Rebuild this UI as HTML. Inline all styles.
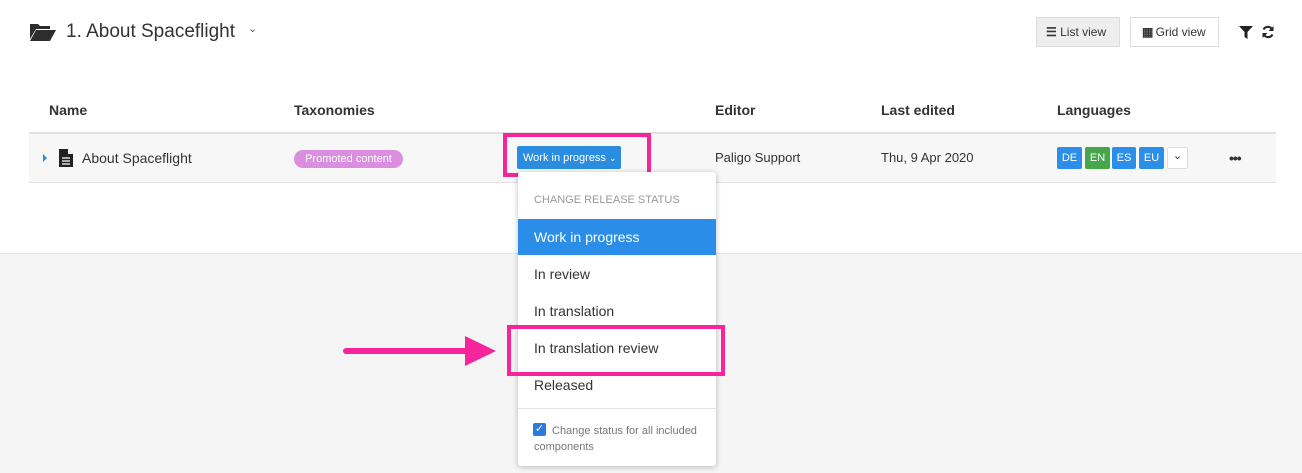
<!DOCTYPE html>
<html><head><style>
*{margin:0;padding:0;box-sizing:border-box}
body{width:1302px;height:473px;position:relative;overflow:hidden;background:#fff;font-family:"Liberation Sans",sans-serif;color:#333}
.a{position:absolute;white-space:nowrap}
.lang{position:absolute;top:147px;height:22px;color:#fff;font-size:11px;text-align:center;line-height:22px;border-radius:2px}
.it{position:absolute;left:534px;font-size:14px;color:#333}
</style></head><body>
<div class="a" style="left:0;top:253px;width:1302px;height:220px;background:#f5f5f5;border-top:1px solid #e4e4e4"></div>
<svg class="a" style="left:29px;top:22px" width="28" height="20" viewBox="0 0 28 20"><path d="M1 2h8l2 2h10v3H7L1 17z" fill="#2d2d2d"/><path d="M7 8h20l-6 11H1z" fill="#2d2d2d"/></svg>
<div class="a" style="left:66px;top:21px;font-size:19px;color:#333">1. About Spaceflight</div>
<div class="a" style="left:248px;top:22px;font-size:11px;color:#555">&#8964;</div>
<div class="a" style="left:1036px;top:17px;width:84px;height:30px;background:#eee;border:1px solid #ddd;font-size:12px;line-height:28px;padding-left:9px"><span style="font-weight:bold">&#9776;</span> List view</div>
<div class="a" style="left:1130px;top:17px;width:89px;height:30px;background:#fff;border:1px solid #ddd;font-size:12px;line-height:28px;padding-left:11px"><span style="font-weight:bold;letter-spacing:-1px">&#9638;</span> Grid view</div>
<svg class="a" style="left:1239px;top:26px" width="14" height="13" viewBox="0 0 14 13"><path d="M0 0h14L8.5 6v7L5.5 11V6z" fill="#222"/></svg>
<svg class="a" style="left:1261px;top:25px" width="14" height="14" viewBox="0 0 14 14"><path d="M11.5 5A5 5 0 0 0 2.5 4.5M2.5 9a5 5 0 0 0 9 .5" stroke="#222" stroke-width="2" fill="none"/><path d="M12.5 1v5h-5zM1.5 13V8h5z" fill="#222"/></svg>
<div class="a" style="left:49px;top:102px;font-size:14px;font-weight:bold">Name</div>
<div class="a" style="left:294px;top:102px;font-size:14px;font-weight:bold">Taxonomies</div>
<div class="a" style="left:715px;top:102px;font-size:14px;font-weight:bold">Editor</div>
<div class="a" style="left:881px;top:102px;font-size:14px;font-weight:bold">Last edited</div>
<div class="a" style="left:1057px;top:102px;font-size:14px;font-weight:bold">Languages</div>
<div class="a" style="left:29px;top:132px;width:1247px;height:51px;background:#f7f7f7;border-top:2px solid #e2e2e2;border-bottom:1px solid #e2e2e2"></div>
<div class="a" style="left:43px;top:154px;width:0;height:0;border-left:4px solid #2a8de0;border-top:4px solid transparent;border-bottom:4px solid transparent"></div>
<svg class="a" style="left:59px;top:149px" width="14" height="18" viewBox="0 0 14 18"><path d="M0 0h9l5 5v13H0z" fill="#222"/><path d="M9 0v5h5" fill="#fff"/><path d="M3 9h8M3 12h8M3 15h8" stroke="#fff" stroke-width="1.3"/></svg>
<div class="a" style="left:82px;top:150px;font-size:14px">About Spaceflight</div>
<div class="a" style="left:294px;top:150px;width:109px;height:18px;background:#d98ee0;border-radius:9px;color:#fff;font-size:11px;text-align:center;line-height:18px">Promoted content</div>
<div class="a" style="left:503px;top:133px;width:148px;height:44px;border:4px solid #f7259c"></div>
<div class="a" style="left:517px;top:146px;width:104px;height:23px;background:#2a8de0;border-radius:2px;color:#fff;font-size:11px;line-height:24px;padding-left:6px">Work in progress <span style="font-size:9px">&#8964;</span></div>
<div class="a" style="left:715px;top:150px;font-size:13px">Paligo Support</div>
<div class="a" style="left:881px;top:150px;font-size:13px">Thu, 9 Apr 2020</div>
<div class="lang" style="left:1057px;width:25px;background:#2b8ee8">DE</div>
<div class="lang" style="left:1085px;width:25px;background:#45a74a">EN</div>
<div class="lang" style="left:1112px;width:24px;background:#2b8ee8">ES</div>
<div class="lang" style="left:1139px;width:25px;background:#2b8ee8">EU</div>
<div class="lang" style="left:1167px;width:21px;background:#fff;border:1px solid #ddd;color:#333;line-height:16px">&#8964;</div>
<div class="a" style="left:1229px;top:150px;font-size:14px;font-weight:bold;letter-spacing:-1px">&#8226;&#8226;&#8226;</div>
<div class="a" style="left:518px;top:172px;width:198px;height:294px;background:#fff;border-radius:3px;box-shadow:0 1px 6px rgba(0,0,0,.25)"></div>
<div class="a" style="left:534px;top:194px;font-size:11px;color:#999">CHANGE RELEASE STATUS</div>
<div class="a" style="left:518px;top:219px;width:198px;height:36px;background:#2a8de8"></div>
<div class="it" style="top:229px;color:#fff">Work in progress</div>
<div class="it" style="top:266px">In review</div>
<div class="it" style="top:303px">In translation</div>
<div class="it" style="top:340px">In translation review</div>
<div class="it" style="top:377px">Released</div>
<div class="a" style="left:518px;top:408px;width:198px;height:1px;background:#e5e5e5"></div>
<div class="a" style="left:533px;top:423px;width:13px;height:13px;background:#2a7ae0;border-radius:2px;color:#fff;font-size:11px;line-height:13px;text-align:center">&#10003;</div>
<div class="a" style="left:552px;top:425px;font-size:11px;color:#777">Change status for all included</div>
<div class="a" style="left:534px;top:441px;font-size:11px;color:#777">components</div>
<div class="a" style="left:507px;top:325px;width:218px;height:51px;border:4px solid #f7259c"></div>
<div class="a" style="left:343px;top:348px;width:130px;height:6px;background:#f7259c;border-radius:3px"></div>
<div class="a" style="left:465px;top:336px;width:0;height:0;border-left:31px solid #f7259c;border-top:15px solid transparent;border-bottom:15px solid transparent"></div>
</body></html>
